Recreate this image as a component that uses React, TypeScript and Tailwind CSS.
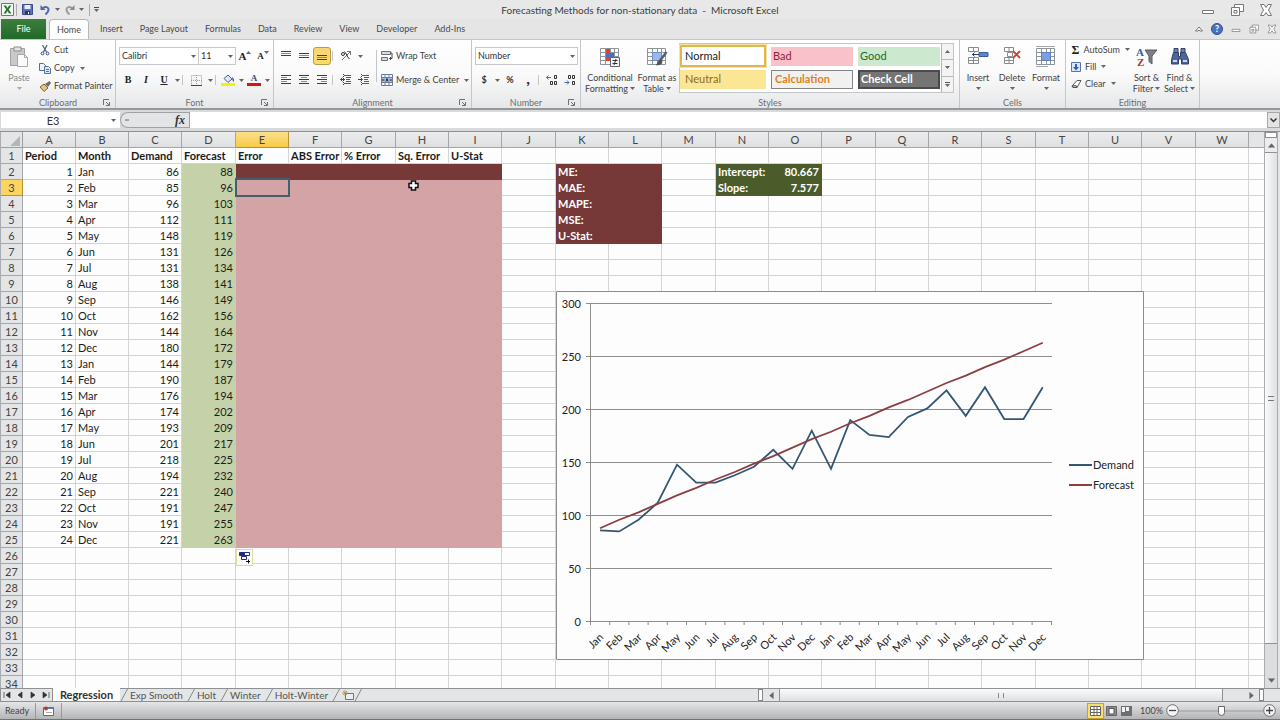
import { type ReactNode } from "react";
import clsx from "clsx";

const MONTHS = ["Jan", "Feb", "Mar", "Apr", "May", "Jun", "Jul", "Aug", "Sep", "Oct", "Nov", "Dec"];
const DEMAND = [86, 85, 96, 112, 148, 131, 131, 138, 146, 162, 144, 180, 144, 190, 176, 174, 193, 201, 218, 194, 221, 191, 191, 221];
const FORECAST = DEMAND.map((_, i) => Math.round(80.667 + 7.577 * (i + 1)));

const COLUMNS = "ABCDEFGHIJKLMNOPQRSTUVW".split("");
const ROWS = Array.from({ length: 34 }, (_, i) => i + 1);
const TABS = ["Insert", "Page Layout", "Formulas", "Data", "Review", "View", "Developer", "Add-Ins"];
const HEADINGS: Record<string, string> = {
  A: "Period", B: "Month", C: "Demand", D: "Forecast", E: "Error",
  F: "ABS Error", G: "% Error", H: "Sq. Error", I: "U-Stat",
};
const STATS = ["ME:", "MAE:", "MAPE:", "MSE:", "U-Stat:"];

function cellText(col: string, row: number): string {
  if (row === 1) return HEADINGS[col] ?? "";
  if (col === "K" && row <= 6) return STATS[row - 2];
  if (col === "N") return row === 2 ? "Intercept:" : row === 3 ? "Slope:" : "";
  if (col === "O") return row === 2 ? "80.667" : row === 3 ? "7.577" : "";
  const i = row - 2;
  if (i >= DEMAND.length) return "";
  if (col === "A") return String(i + 1);
  if (col === "B") return MONTHS[i % 12];
  if (col === "C") return String(DEMAND[i]);
  if (col === "D") return String(FORECAST[i]);
  return "";
}

function cellStyle(col: string, row: number): string {
  if (row === 1) return "border-[#d3d4d8] font-bold";
  if (col === "D" && row <= 25) return "border-[#c5d1a9] bg-[#c5d1a9]";
  if ("EFGHI".includes(col) && row === 2) return "border-[#773938] bg-[#773938]";
  if ("EFGHI".includes(col) && row <= 25) return "border-[#d4a3a5] bg-[#d4a3a5]";
  if ("KL".includes(col) && row <= 6) return "border-[#773938] bg-[#773938] font-bold text-white";
  if ("NO".includes(col) && row <= 3) return "border-[#4b5c2a] bg-[#4b5c2a] font-bold text-white";
  return "border-[#d3d4d8]";
}

function Caret({ className = "" }: { className?: string }) {
  return (
    <svg viewBox="0 0 5 3" className={clsx("h-[3px] w-[5px] shrink-0 fill-[#666]", className)}>
      <path d="M0 0h5L2.500 3z" />
    </svg>
  );
}

function CaretButton({ label, className = "w-2" }: { label: string; className?: string }) {
  return (
    <button aria-label={label} className={clsx("flex h-4 shrink-0 items-center justify-center", className)}>
      <Caret />
    </button>
  );
}

function IconButton({ label, className = "w-[18px]", children }: { label: string; className?: string; children: ReactNode }) {
  return (
    <button aria-label={label} className={clsx("flex h-[18px] shrink-0 items-center justify-center", className)}>
      {children}
    </button>
  );
}

function Divider({ className = "h-2.5 bg-[#c3c5c8]" }: { className?: string }) {
  return <span className={clsx("mx-px w-px shrink-0", className)} />;
}

function Lines({ rows, y = 0 }: { rows: [number, number][]; y?: number }) {
  return (
    <svg viewBox="0 0 12 12" className="size-3">
      {rows.map(([x, w], i) => (
        <path key={i} d={`M${x} ${y + i * 2 + 0.5}h${w}`} stroke={i % 2 ? "#8a8a8a" : "#3d3d3d"} />
      ))}
    </svg>
  );
}

function GridIcon({ children }: { children?: ReactNode }) {
  return (
    <svg viewBox="0 0 22 22" className="size-[22px]">
      <path d="M1.500 2.500h18v16h-18z" fill="#fff" stroke="#8e949b" />
      <path d="M1.500 6.500h18M1.500 10.500h18M1.500 14.500h18M6.500 2.500v16M11.500 2.500v16M15.500 2.500v16" stroke="#8e949b" fill="none" />
      {children}
    </svg>
  );
}

function Group({ name, launcher, className, children }: { name: string; launcher?: boolean; className: string; children: ReactNode }) {
  return (
    <section className={clsx("flex shrink-0 flex-col border-r border-[#c4c6c9]", className)}>
      <div className="flex flex-1">{children}</div>
      <div className="relative flex h-[11px] items-start justify-center leading-[11px] text-[#6b6e72]">
        {name}
        {launcher && (
          <button aria-label={`${name} settings`} className="absolute top-0.5 right-1 size-2">
            <svg viewBox="0 0 8 8" className="size-2" fill="none" stroke="#707070">
              <path d="M.5 6V.5H6M3 3l3 3M6.500 3v3.500H3" />
            </svg>
          </button>
        )}
      </div>
    </section>
  );
}

function BigButton({ lines, caretBelow, className, children }: { lines: string[]; caretBelow?: boolean; className: string; children: ReactNode }) {
  return (
    <button className={clsx("flex shrink-0 flex-col items-center pt-1.5 leading-[11px]", className)}>
      <span className="flex h-[26px] items-start">{children}</span>
      {lines.map((line, i) => (
        <span key={line} className="flex items-center gap-0.5 whitespace-nowrap">
          {line}
          {!caretBelow && i === lines.length - 1 && <Caret />}
        </span>
      ))}
      {caretBelow && <Caret className="mt-1" />}
    </button>
  );
}

function WindowButtons({ small }: { small?: boolean }) {
  const size = small ? "size-2.5" : "size-3.5";
  return (
    <>
      <button aria-label="Minimize"><svg viewBox="0 0 14 14" className={size}><path d="M1.500 7.500h11v3h-11z" fill="#fff" stroke="#777" /></svg></button>
      <button aria-label="Restore">
        <svg viewBox="0 0 14 14" className={size} fill="#fff" stroke="#777">
          <path d="M4.500 1.500h9v7h-9z" /><path d="M1.500 4.500h8v8h-8zM4 7.500h3v2.500H4z" />
        </svg>
      </button>
      <button aria-label="Close">
        <svg viewBox="0 0 14 14" className={size}>
          <path d="M1.500 1.500h3.500l2 3 2-3h3.500L9.500 7l3 5.500H9l-2-3-2 3H1.500l3-5.500z" fill="#fff" stroke="#777" />
        </svg>
      </button>
    </>
  );
}

function TitleBar() {
  return (
    <header className="grid h-[19px] shrink-0 grid-cols-[1fr_auto_1fr] items-center bg-[#e8e8e8]">
      <div className="flex items-center pl-px">
        <svg viewBox="0 0 13 13" className="size-[13px]">
          <path d="M.5.5h12v12H.5z" fill="#f4f9f2" stroke="#5c8a5c" />
          <path d="M2.500 2.500h2.500l1.500 2.500 1.500-2.500h2.500L7.800 6.500l2.700 4H8L6.500 8 5 10.500H2.500l2.700-4z" fill="#2d7a38" />
        </svg>
        <Divider className="mr-1 ml-0.5 h-3 bg-[#a9abae]" />
        <IconButton label="Save" className="w-3">
          <svg viewBox="0 0 11 11" className="size-[11px]">
            <path d="M.5.5h10v10H.5z" fill="#5a6fb4" stroke="#3d4c8c" />
            <path d="M2.500 1h6v4h-6z" fill="#e9edf8" /><path d="M3 7h5v3.500H3z" fill="#2d3a6e" /><path d="M6 8h1v2H6z" fill="#fff" />
          </svg>
        </IconButton>
        <IconButton label="Undo" className="ml-1.5 w-3">
          <svg viewBox="0 0 11 11" className="size-[11px]" fill="none">
            <path d="M3 4c5-3 8 2 2.500 6.500" stroke="#4a67b5" strokeWidth="2" /><path d="M.5 1v5h5z" fill="#4a67b5" />
          </svg>
        </IconButton>
        <CaretButton label="Undo history" className="ml-0.5 w-2" />
        <IconButton label="Redo" className="ml-0.5 w-3">
          <svg viewBox="0 0 11 11" className="size-[11px]" fill="none">
            <path d="M8 4C3 1 0 6 5.500 10.500" stroke="#9a9a9a" strokeWidth="2" /><path d="M10.500 1v5h-5z" fill="#8a8a8a" />
          </svg>
        </IconButton>
        <CaretButton label="Redo history" className="ml-0.5 w-2" />
        <Divider className="mr-1 ml-1 h-3 bg-[#a9abae]" />
        <button aria-label="Customize toolbar" className="flex flex-col items-center gap-px"><span className="h-px w-[5px] bg-[#444]" /><Caret /></button>
      </div>
      <h1 className="text-[10px] whitespace-pre text-[#3c3c3c]">Forecasting Methods for non-stationary data  -  Microsoft Excel</h1>
      <div className="flex items-center justify-end gap-[15px] pr-[7px]"><WindowButtons /></div>
    </header>
  );
}

function TabBar() {
  return (
    <nav className="flex h-5 shrink-0 items-stretch bg-[#e5e5e5] pl-px text-[#4a4a4a]">
      <button className="w-[45px] bg-linear-to-b from-[#3b7f3d] to-[#216a28] text-white">File</button>
      <button className="ml-[3px] w-10 rounded-t-sm border border-b-0 border-[#b6b8bb] bg-white">Home</button>
      <div className="flex items-center gap-[17px] pl-[11px]">
        {TABS.map((tab) => <button key={tab}>{tab}</button>)}
      </div>
      <div className="ml-auto flex items-center gap-2 pr-[3px]">
        <button aria-label="Collapse ribbon"><svg viewBox="0 0 8 8" className="size-2"><path d="M.5 6L4 2l3.500 4H5L4 5 3 6z" fill="#fff" stroke="#777" /></svg></button>
        <button aria-label="Help" className="size-3 rounded-full border border-[#31528f] bg-[#4a72b8] text-[9px] leading-[10px] font-bold text-white">?</button>
        <WindowButtons small />
      </div>
    </nav>
  );
}

function SmallButton({ icon, text, caret, className = "h-[18px]" }: { icon: ReactNode; text: string; caret?: boolean; className?: string }) {
  return (
    <button className={clsx("flex items-center gap-[3px] whitespace-nowrap", className)}>
      <span className="flex w-3 justify-center">{icon}</span>
      {text}
      {caret && <Caret className="ml-0.5" />}
    </button>
  );
}

function ClipboardGroup() {
  return (
    <Group name="Clipboard" launcher className="w-[115px]">
      <BigButton lines={["Paste"]} caretBelow className="w-9 text-[#8a8a8a] [&>svg]:fill-[#aaa]">
        <svg viewBox="0 0 20 22" className="h-[22px] w-5">
          <path d="M1.500 2.500h14v17h-14z" fill="#c9c9c9" stroke="#a2a2a2" />
          <path d="M5 1h7v4H5z" fill="#e4e4e4" stroke="#8b8b8b" />
          <path d="M8.500 8.500h7l3 3v9h-10z" fill="#fafafa" stroke="#a8a8a8" /><path d="M15.500 8.500v3h3" fill="none" stroke="#a8a8a8" />
        </svg>
      </BigButton>
      <div className="flex flex-col pt-px pl-0.5">
        <SmallButton text="Cut" icon={
          <svg viewBox="0 0 10 12" className="h-3 w-2.5" fill="none">
            <path d="M2.500 1l4 7M7 1L3.500 8" stroke="#4e5f82" strokeWidth="1.300" />
            <circle cx="2.500" cy="9.500" r="1.400" stroke="#2f4b8a" /><circle cx="7.500" cy="9.500" r="1.400" stroke="#2f4b8a" />
          </svg>
        } />
        <SmallButton caret text="Copy" icon={
          <svg viewBox="0 0 12 11" className="h-[11px] w-3" stroke="#54709f">
            <path d="M.5.5h4l2 2v5h-6z" fill="#eef3fb" /><path d="M5.500 3.500h4l2 2v5h-6z" fill="#dce7f7" /><path d="M7 6.500h3M7 8.500h3" />
          </svg>
        } />
        <SmallButton text="Format Painter" icon={
          <svg viewBox="0 0 12 12" className="size-3">
            <path d="M1 7l4-3 4 4-4 3.500z" fill="#e3c777" stroke="#7d6a35" /><path d="M6 4l4.500-3L12 3 9 7z" fill="#6e6e6e" />
          </svg>
        } />
      </div>
    </Group>
  );
}

function FontGroup() {
  return (
    <Group name="Font" launcher className="w-[158px]">
      <div className="flex flex-col gap-1.5 pt-[7px] pl-[3px]">
        <div className="flex items-center">
          <Select label="Font name" value="Calibri" className="w-20" />
          <Select label="Font size" value="11" className="-ml-px w-[38px]" />
          <IconButton label="Grow font"><span className="font-[Liberation_Serif,serif] text-[11px] font-bold text-[#222]">A</span><Caret className="mb-2 rotate-180" /></IconButton>
          <IconButton label="Shrink font"><span className="font-[Liberation_Serif,serif] text-[9px] font-bold text-[#222]">A</span><Caret className="mb-2" /></IconButton>
        </div>
        <div className="flex items-center font-[Liberation_Serif,serif] text-[10px] font-bold text-[#222]">
          <IconButton label="Bold">B</IconButton>
          <IconButton label="Italic"><i>I</i></IconButton>
          <IconButton label="Underline"><u>U</u></IconButton>
          <CaretButton label="Underline styles" />
          <Divider />
          <IconButton label="Borders" className="ml-0.5 w-5">
            <svg viewBox="0 0 11 11" className="size-[11px]" fill="none" stroke="#9a9a9a"><path d="M.5.5h10v10H.5zM5.500 0v11M0 5.500h11" strokeDasharray="1 1" /><path d="M0 10.500h11" stroke="#444" /></svg>
          </IconButton>
          <CaretButton label="Border styles" />
          <Divider />
          <IconButton label="Fill color" className="ml-0.5 w-[18px]">
            <svg viewBox="0 0 14 12" className="h-3 w-3.5">
              <path d="M3 4.500l4-3.500 4 4-4 3.500z" fill="#dce6f5" stroke="#4c628c" /><path d="M11 3c2 1 2.500 3 1.500 5-1-1-1-2-1.500-5z" fill="#35558f" />
              <path d="M0 9h14v3H0z" fill="#f7f000" />
            </svg>
          </IconButton>
          <CaretButton label="Fill colors" />
          <IconButton label="Font color">
            <span className="flex flex-col items-center"><span className="text-[9px] leading-[9px] text-[#3a4a76]">A</span><span className="h-[3px] w-3.5 bg-[#e01010]" /></span>
          </IconButton>
          <CaretButton label="Font colors" />
        </div>
      </div>
    </Group>
  );
}

function Select({ label, value, className }: { label: string; value: string; className: string }) {
  return (
    <span className={clsx("relative flex h-[18px] items-center", className)}>
      <select aria-label={label} defaultValue={value} className="h-full w-full appearance-none border border-[#c6c8cb] bg-white pl-0.5 text-[#333]">
        <option>{value}</option>
      </select>
      <Caret className="pointer-events-none absolute right-[3px]" />
    </span>
  );
}

function AlignmentGroup() {
  return (
    <Group name="Alignment" launcher className="w-[198px]">
      <div className="flex w-[101px] flex-col gap-1.5 pt-[7px] pl-[3px]">
        <div className="flex items-center">
          <IconButton label="Top align"><Lines rows={[[1, 10], [1, 10], [1, 10]]} y={1} /></IconButton>
          <IconButton label="Middle align"><Lines rows={[[1, 10], [1, 10], [1, 10]]} y={3} /></IconButton>
          <IconButton label="Bottom align" className="w-[18px] rounded-[3px] border border-[#b99a45] bg-linear-to-b from-[#f9d47a] to-[#fbdd63]">
            <Lines rows={[[1, 10], [1, 10], [1, 10]]} y={5} />
          </IconButton>
          <Divider />
          <IconButton label="Orientation" className="ml-0.5 w-5">
            <svg viewBox="0 0 12 12" className="size-3" fill="none" stroke="#333">
              <path d="M2 10L10.500 1.500M10.500 5V1.500H7" stroke="#777" /><circle cx="3" cy="4" r="1.500" /><path d="M4.500 1.500l3 4.500M7 6l2.500 3" />
            </svg>
          </IconButton>
          <CaretButton label="Orientations" />
        </div>
        <div className="flex items-center">
          <IconButton label="Align left"><Lines rows={[[1, 10], [1, 6], [1, 10], [1, 6], [1, 10]]} y={1} /></IconButton>
          <IconButton label="Center"><Lines rows={[[1, 10], [3, 6], [1, 10], [3, 6], [1, 10]]} y={1} /></IconButton>
          <IconButton label="Align right"><Lines rows={[[1, 10], [5, 6], [1, 10], [5, 6], [1, 10]]} y={1} /></IconButton>
          <Divider className="mr-1 ml-px h-2.5 bg-[#c3c5c8]" />
          {["Decrease indent", "Increase indent"].map((label) => (
            <IconButton key={label} label={label}>
              <svg viewBox="0 0 12 12" className="size-3" fill="none" stroke="#444">
                <path d="M4 1.500h7M6 3.500h5M6 5.500h4M6 7.500h5M4 9.500h7" stroke="#5a5a5a" />
                {label === "Decrease indent" ? <path d="M5 5.500H.5M2.500 3.500L.5 5.500l2 2" /> : <path d="M0 5.500h4M2.500 3.500l2 2-2 2" />}
                <path d="M3.500 0v12" strokeDasharray="1 1" />
              </svg>
            </IconButton>
          ))}
        </div>
      </div>
      <Divider className="mt-2.5 h-8 bg-[#c3c5c8]" />
      <div className="flex flex-col gap-1.5 pt-[7px] pl-[3px]">
        <SmallButton text="Wrap Text" icon={
          <svg viewBox="0 0 12 12" className="size-3" fill="none" stroke="#6a6f76">
            <path d="M.5 1.500h9v3h-9zM.5 7.500h6v3h-6z" fill="#d5dae0" /><path d="M9.500 3h1.500v5.500H8.500M10 7L8.500 8.500 10 10" stroke="#444" />
          </svg>
        } />
        <SmallButton caret text="Merge & Center" icon={
          <svg viewBox="0 0 12 12" className="size-3" fill="none" stroke="#6a7c98">
            <path d="M.5.5h11v11H.5z" fill="#fff" /><path d="M1 3h10v6H1z" fill="#a9c0e4" stroke="none" />
            <path d="M.5 3.500h11M.5 8.500h11M4 .5v3M8 .5v3M4 8.500v3M8 8.500v3" /><path d="M1 6h2.500M11 6H8.500M5 7.500L6 4.500l1 3" stroke="#222" />
          </svg>
        } />
      </div>
    </Group>
  );
}

function NumberGroup() {
  return (
    <Group name="Number" launcher className="w-[109px]">
      <div className="flex flex-col gap-1.5 pt-[7px] pl-[3px]">
        <Select label="Number format" value="Number" className="w-[103px]" />
        <div className="flex items-center font-bold text-[#333]">
          <IconButton label="Currency">$</IconButton>
          <CaretButton label="Currencies" />
          <IconButton label="Percent">%</IconButton>
          <IconButton label="Comma style"><span className="mb-1 text-base">,</span></IconButton>
          <Divider className="mr-1 ml-px h-2.5 bg-[#c3c5c8]" />
          {[".0", ".00"].map((digits) => (
            <IconButton key={digits} label={digits === ".0" ? "Increase decimal" : "Decrease decimal"}>
              <svg viewBox="0 0 12 12" className="size-3" fill="none" stroke="#333">
                <path d={digits === ".0" ? "M5 3.500H.5M2.500 1.500l-2 2 2 2" : "M.5 8.500H5M3 6.500l2 2-2 2"} stroke="#4a6aa8" />
                <path d="M8.500 1.500h2v3h-2zM8.500 7.500h2v3h-2z" />
                <path d={digits === ".0" ? "M4.500 7.500h2v3h-2z" : "M4.500 1.500h2v3h-2z"} />
              </svg>
            </IconButton>
          ))}
        </div>
      </div>
    </Group>
  );
}

const GALLERY: [string, string][] = [
  ["Normal", "border-2 border-[#dcb94e] bg-white pl-[3px] text-[#222] outline-1 outline-[#f3e2a3]"],
  ["Bad", "bg-[#f9c2cb] pl-0.5 text-[#93223a]"],
  ["Good", "bg-[#cce9cf] pl-0.5 text-[#1f6a2d]"],
  ["Neutral", "bg-[#fbe695] pl-[5px] text-[#8f6a19]"],
  ["Calculation", "border border-[#858585] bg-[#f1f1f1] pl-[3px] font-bold text-[#e0811e]"],
  ["Check Cell", "border-2 border-[#4b4b4b] bg-[#747474] pl-px font-bold text-white"],
];

function StylesGroup() {
  return (
    <Group name="Styles" className="w-[379px]">
      <BigButton lines={["Conditional", "Formatting"]} className="ml-1 w-[50px]">
        <GridIcon>
          <path d="M7 3h4v4H7zM7 11h4v4H7z" fill="#d8423c" /><path d="M7 7h8v4H7z" fill="#4b6fc0" />
          <path d="M11.500 11.500h9v9h-9z" fill="#f4f4f4" stroke="#666" /><path d="M13.500 14.500h5M13.500 17.500h5M17 13l-2 6" stroke="#333" />
        </GridIcon>
      </BigButton>
      <BigButton lines={["Format as", "Table"]} className="w-11">
        <GridIcon>
          <path d="M6.500 6.500h9v8h-9z" fill="#9db8e8" stroke="#6d8cc4" /><path d="M20.500 6l-6 8" stroke="#5b6066" strokeWidth="2.500" />
          <path d="M14.500 13c-3 1-2 4-5 6 4 1 7-1 7-4z" fill="#4d5359" />
        </GridIcon>
      </BigButton>
      <div className="mt-[3px] flex h-[50px] w-[275px] border border-[#c3c5c8] bg-white">
        <div className="grid flex-1 grid-cols-[86px_82px_82px] grid-rows-[22px_20px] items-center gap-x-[5px] gap-y-0.5 py-px text-[11px]">
          {GALLERY.map(([name, look], i) => (
            <button key={name} className={clsx(i === 0 ? "h-[22px]" : "h-[19px]", "text-left", look)}>{name}</button>
          ))}
        </div>
        <div className="flex w-[12px] flex-col divide-y divide-[#b5b7ba] border-l border-[#b5b7ba] bg-[#f3f3f3]">
          <button aria-label="Previous styles" className="grid flex-1 place-items-center"><Caret className="rotate-180" /></button>
          <button aria-label="Next styles" className="grid flex-1 place-items-center"><Caret /></button>
          <button aria-label="All styles" className="flex flex-1 flex-col items-center justify-center gap-px"><span className="h-px w-[5px] bg-[#555]" /><Caret /></button>
        </div>
      </div>
    </Group>
  );
}

function CellsGroup() {
  return (
    <Group name="Cells" className="w-[106px]">
      <BigButton lines={["Insert"]} caretBelow className="ml-px w-[34px]">
        <svg viewBox="0 0 22 20" className="h-5 w-[22px]" fill="#fff" stroke="#8a8a8a">
          <path d="M1.500 1.500h10v4h-10zM6.500 1.500v4M1.500 11.500h10v6h-10zM6.500 11.500v6M1.500 14.500h10" />
          <path d="M12 6.500h9v4h-9z" fill="#5f82cc" stroke="#3d5a9b" /><path d="M12 8.500H5M7.500 6.500l-2 2 2 2" stroke="#2c3e66" fill="none" />
        </svg>
      </BigButton>
      <BigButton lines={["Delete"]} caretBelow className="w-[34px]">
        <svg viewBox="0 0 22 20" className="h-5 w-[22px]" fill="#fff" stroke="#8a8a8a">
          <path d="M3.500 1.500h9v4h-9zM8 1.500v4M6.500 6.500h5v4h-5zM3.500 11.500h9v6h-9zM8 11.500v6M3.500 14.500h9" />
          <path d="M12 5l7 7M19 5l-7 7" stroke="#d0432f" strokeWidth="1.800" />
        </svg>
      </BigButton>
      <BigButton lines={["Format"]} caretBelow className="w-[34px]">
        <GridIcon><path d="M6.500 6.500h9v8h-9z" fill="#7d9fe0" stroke="#5f7fbe" /><path d="M1 .5h19M1 20.500h12" stroke="#a3a8ae" /></GridIcon>
      </BigButton>
    </Group>
  );
}

function EditingGroup() {
  return (
    <Group name="Editing" className="w-[134px]">
      <div className="flex w-16 flex-col pt-px pl-1">
        <SmallButton caret text="AutoSum" className="h-[17px]" icon={<b className="font-[Liberation_Serif,serif] text-xs leading-3 text-[#222]">Σ</b>} />
        <SmallButton caret text="Fill" className="h-[17px]" icon={
          <svg viewBox="0 0 10 10" className="size-2.5"><path d="M.5.5h9v9h-9z" fill="#dbe6f8" stroke="#5674ad" /><path d="M4 2h2v3h2L5 8.500 2 5h2z" fill="#2f5fb8" /></svg>
        } />
        <SmallButton caret text="Clear" className="h-[17px]" icon={
          <svg viewBox="0 0 11 10" className="h-2.5 w-[11px]"><path d="M1 7l5-5.500h4L6 8.500H2z" fill="#fff" stroke="#555" /><path d="M1 7l4-.5 1 2H2z" fill="#c0c0c0" stroke="#555" /></svg>
        } />
      </div>
      <BigButton lines={["Sort &", "Filter"]} className="w-[33px]">
        <svg viewBox="0 0 22 22" className="size-[22px]">
          <path d="M9 4h12l-5 6v8l-3-2.500V10z" fill="#7c8187" stroke="#565b60" />
          <text x="0" y="10" fill="#3458a5" className="font-[Liberation_Serif,serif] text-[11px] font-bold">A</text>
          <text x="1" y="20" fill="#b03329" className="font-[Liberation_Serif,serif] text-[11px] font-bold">Z</text>
        </svg>
      </BigButton>
      <BigButton lines={["Find &", "Select"]} className="w-[33px]">
        <svg viewBox="0 0 22 20" className="h-5 w-[22px]" stroke="#2f3f66">
          <path d="M5 2.500h4v4H5zM12 2.500h4v4h-4z" fill="#6d80b0" /><path d="M4.500 6.500h5v4h2v-4h5l3 7v4.500h-7v-5h-3v5h-7V13.500z" fill="#4f659b" />
          <path d="M4 15h4M14 15h4" stroke="#c9d6f0" strokeWidth="2" />
        </svg>
      </BigButton>
    </Group>
  );
}

function FormulaBar() {
  return (
    <div className="flex h-[22px] shrink-0 items-stretch border-b border-[#8d9093] bg-[#d9dadc] pt-0.5 pb-[3px] text-[11px] text-[#333]">
      <div className="relative ml-px flex w-[119px] items-center bg-white">
        <input aria-label="Name box" defaultValue="E3" className="h-full w-[104px] text-center" />
        <CaretButton label="Cell names" className="ml-1 w-2" />
      </div>
      <div className="flex w-[69px] items-center rounded-l-full border-y border-l border-[#9fa1a4] bg-[#e3e4e5] pl-1">
        <svg viewBox="0 0 4 4" className="size-1"><path d="M0 2h4" stroke="#666" /></svg>
        <button className="ml-auto pr-1 font-[Liberation_Serif,serif] text-xs leading-3 font-bold italic">fx</button>
      </div>
      <input aria-label="Formula" className="min-w-0 flex-1 border-l border-[#9fa1a4] bg-white" />
      <button aria-label="Expand formula bar" className="grid w-[13px] place-items-center border border-[#a5a7aa] bg-[#e3e3e3]">
        <svg viewBox="0 0 7 5" className="h-[5px] w-[7px]"><path d="M.5.5l3 3 3-3" fill="none" stroke="#333" strokeWidth="1.500" /></svg>
      </button>
    </div>
  );
}

function Chart() {
  const x = (i: number) => 44 + i * 19.25;
  const y = (v: number) => 330.5 - v * 1.06;
  const line = (values: number[]) => values.map((v, i) => `${x(i)},${y(v)}`).join(" ");
  return (
    <svg viewBox="0 0 588 369" className="absolute top-[159px] left-[555px] h-[369px] w-[588px] text-[11px]">
      <path d="M.5.5h587v368H.5z" fill="#fdfdfd" stroke="#8c8c8c" />
      {[0, 50, 100, 150, 200, 250, 300].map((v) => (
        <g key={v}>
          <path d={`M30 ${Math.floor(y(v)) + 0.5}H496`} stroke="#8e8e8e" />
          <text x="25" y={y(v) + 4} textAnchor="end" fill="#222">{v}</text>
        </g>
      ))}
      <path d="M34.500 12v318" stroke="#8e8e8e" />
      {DEMAND.map((_, i) => (
        <g key={i}>
          <path d={`M${34.5 + i * 19.2} 330v4`} stroke="#8e8e8e" />
          <text textAnchor="end" transform={`translate(${x(i) + 4} 347) rotate(-45)`} fill="#222">{MONTHS[i % 12]}</text>
        </g>
      ))}
      <path d="M495.500 330v4" stroke="#8e8e8e" />
      <polyline points={line(DEMAND)} fill="none" stroke="#345676" strokeWidth="1.800" />
      <polyline points={line(FORECAST)} fill="none" stroke="#8a3f43" strokeWidth="1.800" />
      <path d="M513 174h23" stroke="#345676" strokeWidth="2" />
      <text x="537" y="178" fill="#222">Demand</text>
      <path d="M513 194h23" stroke="#8a3f43" strokeWidth="2" />
      <text x="537" y="198" fill="#222">Forecast</text>
    </svg>
  );
}

function Sheet() {
  return (
    <div className="relative min-w-0 flex-1 overflow-hidden border-l border-[#a9acb0] bg-[#fdfdfd]">
      <table className="w-full table-fixed border-separate border-spacing-0 text-[11px] leading-[15px] text-[#1c1c1c]">
        <colgroup>
          <col className="w-[22px]" />
          {COLUMNS.map((c, i) => <col key={c} className={i % 3 === 0 && i > 0 ? "w-[54px]" : "w-[53px]"} />)}
          <col />
        </colgroup>
        <thead>
          <tr className="h-4">
            <td className="border-r border-b border-[#9a9da1] bg-[#e4e5e6] p-0">
              <svg viewBox="0 0 21 14" className="h-3.5 w-[21px]"><path d="M19 3v10H9z" fill="#b3b5b8" /></svg>
            </td>
            {COLUMNS.map((c) => (
              <th key={c} className={clsx("border-r border-b p-0 font-normal text-[#444]", c === "E" ? "border-[#b5923c] bg-linear-to-b from-[#fbe08a] to-[#f8c93f]" : "border-[#a3a6aa] bg-linear-to-b from-[#ececed] to-[#dfe0e1]")}>{c}</th>
            ))}
            <th className="border-b border-[#a3a6aa] bg-[#e4e5e6] p-0" />
          </tr>
        </thead>
        <tbody>
          {ROWS.map((r) => (
            <tr key={r} className="h-4">
              <th className={clsx("border-r border-b p-0 font-normal text-[#444]", r === 3 ? "border-[#b5923c] bg-[#fbd55f]" : "border-[#a3a6aa] bg-[#e4e5e7]")}>{r}</th>
              {COLUMNS.map((c) => (
                <td key={c} className={clsx("relative border-r border-b py-0 pr-0.5 pl-0.5 whitespace-nowrap", r > 1 && "ACDO".includes(c) && "text-right", cellStyle(c, r))}>
                  {cellText(c, r)}
                  {c === "E" && r === 3 && (
                    <span className="absolute -top-0.5 -right-0.5 -bottom-0.5 -left-px z-10 border-2 border-[#42606b]" />
                  )}
                  {c === "H" && r === 3 && (
                    <svg viewBox="0 0 11 11" className="absolute top-0 left-3 size-[11px]"><path d="M3.500 1h4v2.500H10v4H7.500V10h-4V7.500H1v-4h2.500z" fill="#fff" stroke="#111" strokeWidth="1.500" /></svg>
                  )}
                  {c === "E" && r === 26 && (
                    <button aria-label="Auto fill options" className="absolute top-px left-0 z-10 border border-[#e3dc9a] bg-[#fbfbfb] p-px">
                      <svg viewBox="0 0 13 13" className="size-[13px]" fill="#fff" stroke="#1f2a80">
                        <path d="M1.500 1.500h5v3h-5z" fill="#1f2a80" /><path d="M6.500 1.500h5v3h-5zM3.500 5.500h5v3h-5z" /><path d="M8 10.500h4M10.500 8.500v4" stroke="#111" />
                      </svg>
                    </button>
                  )}
                </td>
              ))}
              <td className="border-b border-[#d3d4d8] p-0" />
            </tr>
          ))}
        </tbody>
      </table>
      <Chart />
    </div>
  );
}

function VerticalScroll() {
  return (
    <div className="flex w-3.5 shrink-0 flex-col items-stretch border-x border-[#a9abae] bg-[#dcdddf]">
      <span className="h-1.5 border border-[#8d8f92] bg-white" />
      <button aria-label="Scroll up" className="grid h-3.5 place-items-center bg-[#ececec]"><Caret className="rotate-180 scale-150" /></button>
      <div className="flex flex-1 flex-col pb-7">
        <div className="grid flex-1 place-items-center border-y border-[#8f9194] bg-linear-to-r from-[#fbfbfb] to-[#dfe0e2]">
          <span className="h-[5px] w-1.5 border-y border-[#777]" />
        </div>
      </div>
      <button aria-label="Scroll down" className="grid h-4 place-items-center"><Caret className="scale-150" /></button>
    </div>
  );
}

function Slash() {
  return <svg viewBox="0 0 8 13" className="h-[13px] w-2 shrink-0"><path d="M.5 13L7.500 0" stroke="#85888c" /></svg>;
}

function SheetTabs() {
  const arrows: [string, string][] = [
    ["First sheet", "M1 1v6M7 1L3 4l4 3z"], ["Previous sheet", "M6 1L2 4l4 3z"],
    ["Next sheet", "M2 1l4 3-4 3z"], ["Last sheet", "M1 1l4 3-4 3zM7 1v6"],
  ];
  return (
    <div className="flex h-3.5 shrink-0 items-stretch border-b border-[#8e9194] bg-[#e4e5e6] text-[10px] leading-[13px] text-[#555]">
      <div className="flex w-[53px] shrink-0 items-center justify-around border border-b-0 border-[#8e9194]">
        {arrows.map(([label, d]) => (
          <button key={label} aria-label={label}><svg viewBox="0 0 8 8" className="size-2" fill="#333" stroke="#333" strokeWidth=".7"><path d={d} /></svg></button>
        ))}
      </div>
      <button className="w-[67px] shrink-0 bg-white text-[11px] font-bold text-[#333]">Regression</button>
      <div className="flex flex-1 items-center border-t border-[#8e9194]">
        <Slash />
        {["Exp Smooth", "Holt", "Winter", "Holt-Winter"].map((name) => (
          <span key={name} className="flex">
            <button className="pr-1 pl-0.5 whitespace-nowrap">{name}</button>
            <Slash />
          </span>
        ))}
        <button aria-label="Insert sheet" className="pl-0.5">
          <svg viewBox="0 0 12 11" className="h-[11px] w-3"><path d="M3.500 3.500h8v6h-8z" fill="#e8eefa" stroke="#5a76a8" /><path d="M3 0v6M0 3h6M1 1l4 4M5 1L1 5" stroke="#b0953c" strokeWidth=".8" /></svg>
        </button>
        <Slash />
      </div>
      <div className="flex w-[522px] shrink-0 items-stretch border-t border-[#8e9194] pr-4">
        <span className="w-[5px] border border-[#85888c] bg-white" />
        <button aria-label="Scroll left" className="grid w-4 place-items-center"><Caret className="rotate-90 scale-150" /></button>
        <div className="grid flex-1 place-items-center border-x border-[#8f9194] bg-linear-to-b from-[#fbfbfb] to-[#dfe0e2]"><span className="h-[5px] w-1.5 border-x border-[#888]" /></div>
        <span className="w-[22px]" />
        <button aria-label="Scroll right" className="grid w-3 place-items-center"><Caret className="-rotate-90 scale-150" /></button>
        <span className="ml-0.5 w-[5px] border border-[#85888c] bg-white" />
      </div>
    </div>
  );
}

function StatusBar() {
  return (
    <footer className="flex h-[18px] shrink-0 items-center border-b border-[#707375] bg-linear-to-b from-[#e6e6e7] to-[#b4b5b7] pr-1 pl-[5px] text-[#444]">
      <span className="w-[29px]">Ready</span>
      <Divider className="h-4 bg-[#98999b]" />
      <button aria-label="Record macro" className="mx-[6px]">
        <svg viewBox="0 0 11 10" className="h-2.5 w-[11px]"><path d="M.5 1.500h10v8H.5z" fill="#fff" stroke="#5a6a88" /><path d="M1 1h10v2H1z" fill="#5a78b4" /><circle cx="3" cy="2.500" r="2" fill="#b53c35" /><path d="M3 6.500h6" stroke="#aaa" /></svg>
      </button>
      <Divider className="h-4 bg-[#98999b]" />
      <div className="ml-auto flex items-center">
        <button aria-label="Normal view" className="border border-[#bfa145] bg-[#fbdf6e] p-0.5">
          <svg viewBox="0 0 11 10" className="h-2.5 w-[11px]"><path d="M.5.5h10v9H.5zM.5 3.500h10M.5 6.500h10M4 .5v9M7 .5v9" fill="#fff" stroke="#666" /></svg>
        </button>
        <button aria-label="Page layout view" className="p-0.5">
          <svg viewBox="0 0 11 10" className="h-2.5 w-[11px]"><path d="M.5.5h10v9H.5z" fill="#8b8d90" stroke="#666" /><path d="M3 2.500h5v5.500H3z" fill="#fff" stroke="#555" /></svg>
        </button>
        <button aria-label="Page break preview" className="p-0.5">
          <svg viewBox="0 0 11 10" className="h-2.5 w-[11px]"><path d="M0 0h11v10H0z" fill="#6d6f72" /><path d="M1 1h3v5H1zM5 1h3v4H5z" fill="#f2f2f2" /></svg>
        </button>
        <span className="ml-1.5 w-[26px]">100%</span>
        <ZoomButton label="Zoom out" d="M3 6.500h7" />
        <input type="range" aria-label="Zoom" defaultValue={50} className="h-3.5 w-[84px] appearance-none bg-linear-to-b from-transparent from-45% via-[#777] via-50% to-transparent to-55% [&::-webkit-slider-thumb]:h-2.5 [&::-webkit-slider-thumb]:w-[7px] [&::-webkit-slider-thumb]:appearance-none [&::-webkit-slider-thumb]:rounded-b-full [&::-webkit-slider-thumb]:border [&::-webkit-slider-thumb]:border-[#666] [&::-webkit-slider-thumb]:bg-white" />
        <ZoomButton label="Zoom in" d="M3 6.500h7M6.500 3v7" />
      </div>
    </footer>
  );
}

function ZoomButton({ label, d }: { label: string; d: string }) {
  return (
    <button aria-label={label}>
      <svg viewBox="0 0 13 13" className="size-[13px]"><circle cx="6.500" cy="6.500" r="5.800" fill="#f4f4f4" stroke="#6e7073" /><path d={d} stroke="#444" strokeWidth="1.300" /></svg>
    </button>
  );
}

export default function App() {
  return (
    <div className="flex h-screen flex-col overflow-hidden bg-[#e5e5e5] font-[Lato,sans-serif] text-[9px] leading-3 text-[#444]">
      <TitleBar />
      <TabBar />
      <div className="flex h-[71px] shrink-0 border-t border-b-2 border-t-[#c4c6c8] border-b-[#95989b] bg-linear-to-b from-white via-[#fafafa] to-[#e6e7e9] pl-px">
        <ClipboardGroup />
        <FontGroup />
        <AlignmentGroup />
        <NumberGroup />
        <StylesGroup />
        <CellsGroup />
        <EditingGroup />
      </div>
      <FormulaBar />
      <main className="flex min-h-0 flex-1 pr-0.5">
        <Sheet />
        <VerticalScroll />
      </main>
      <SheetTabs />
      <StatusBar />
    </div>
  );
}
